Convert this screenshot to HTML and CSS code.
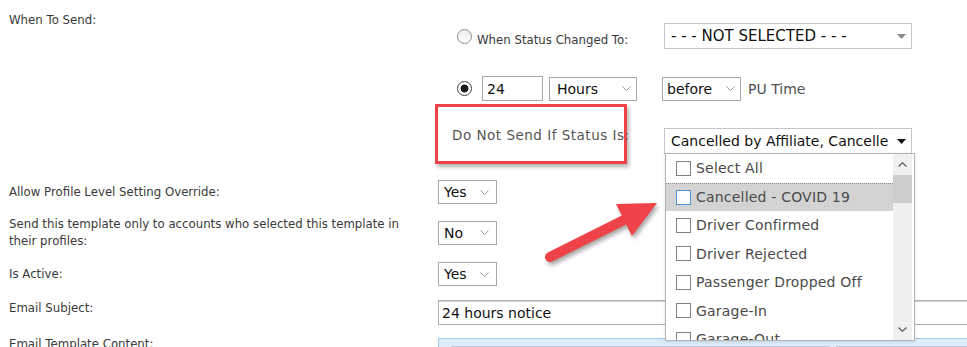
FILE: index.html
```html
<!DOCTYPE html>
<html lang="en">
<head>
  <meta charset="UTF-8">
  <meta name="viewport" content="width=device-width, initial-scale=1.0">
  <title>Email Template Settings</title>
  <link rel="stylesheet" href="styles.css">
</head>
<body>
  <div class="form">
    <div class="row row-when">
      <div class="label">When To Send:</div>
      <div class="field">
        <div class="sub-row">
          <div class="sub-label">
            <span class="radio"></span>
            <span class="radio-text">When Status Changed To:</span>
          </div>
          <div class="select select-status light big">
            <span>- - - NOT SELECTED - - -</span>
            <svg width="9" height="5" viewBox="0 0 9 5"><path d="M0 0H9L4.5 5Z" fill="#8a8a8a"/></svg>
          </div>
        </div>
        <div class="sub-row">
          <div class="sub-label">
            <span class="radio checked"></span>
            <span class="input input-num">24</span>
            <span class="select select-unit">
              <span>Hours</span>
              <svg width="9" height="5" viewBox="0 0 9 5"><path d="M0.5 0.5L4.5 4.5L8.5 0.5" fill="none" stroke="#9a9a9a"/></svg>
            </span>
          </div>
          <div class="sub-value">
            <span class="select select-before">
              <span>before</span>
              <svg width="9" height="5" viewBox="0 0 9 5"><path d="M0.5 0.5L4.5 4.5L8.5 0.5" fill="none" stroke="#9a9a9a"/></svg>
            </span>
            <span class="pu">PU Time</span>
          </div>
        </div>
        <div class="sub-row">
          <div class="sub-label dns">Do Not Send If Status Is:</div>
          <div class="select select-status light">
            <span>Cancelled by Affiliate, Cancelle</span>
            <svg width="9" height="5" viewBox="0 0 9 5"><path d="M0 0H9L4.5 5Z" fill="#111"/></svg>
          </div>
        </div>
      </div>
    </div>

    <div class="row row-allow">
      <div class="label">Allow Profile Level Setting Override:</div>
      <div class="field">
        <div class="select select-small">
          <span>Yes</span>
          <svg width="9" height="5" viewBox="0 0 9 5"><path d="M0.5 0.5L4.5 4.5L8.5 0.5" fill="none" stroke="#9a9a9a"/></svg>
        </div>
      </div>
    </div>

    <div class="row row-only">
      <div class="label two-line">Send this template only to accounts who selected this template in their profiles:</div>
      <div class="field">
        <div class="select select-small">
          <span>No</span>
          <svg width="9" height="5" viewBox="0 0 9 5"><path d="M0.5 0.5L4.5 4.5L8.5 0.5" fill="none" stroke="#9a9a9a"/></svg>
        </div>
      </div>
    </div>

    <div class="row row-active">
      <div class="label">Is Active:</div>
      <div class="field">
        <div class="select select-small">
          <span>Yes</span>
          <svg width="9" height="5" viewBox="0 0 9 5"><path d="M0.5 0.5L4.5 4.5L8.5 0.5" fill="none" stroke="#9a9a9a"/></svg>
        </div>
      </div>
    </div>

    <div class="row row-subject">
      <div class="label">Email Subject:</div>
      <div class="field">
        <div class="input input-subject">24 hours notice</div>
      </div>
    </div>

    <div class="row row-content">
      <div class="label">Email Template Content:</div>
      <div class="field">
        <div class="editor">
          <div class="toolbar">
            <span class="tool-group w1"></span>
            <span class="tool-group w1"></span>
            <span class="tool-group w2"></span>
            <span class="tool-group w3"></span>
            <span class="tool-group w4"></span>
          </div>
        </div>
      </div>
    </div>

    <!-- annotations -->
    <div class="callout"></div>
    <svg class="pointer" width="140" height="80" viewBox="0 0 140 80">
      <line x1="20" y1="67" x2="96" y2="29" stroke="#ef4349" stroke-width="10" stroke-linecap="round"/>
      <polygon points="127,13 86,14 102,46" fill="#ef4349"/>
    </svg>

    <!-- open status list -->
    <div class="dropdown">
      <div class="options">
        <div class="option"><span class="check"></span>Select All</div>
        <div class="option active"><span class="check focus"></span>Cancelled - COVID 19</div>
        <div class="option"><span class="check"></span>Driver Confirmed</div>
        <div class="option"><span class="check"></span>Driver Rejected</div>
        <div class="option"><span class="check"></span>Passenger Dropped Off</div>
        <div class="option"><span class="check"></span>Garage-In</div>
        <div class="option"><span class="check"></span>Garage-Out</div>
      </div>
      <div class="scrollbar">
        <div class="sb-btn">
          <svg width="9" height="5" viewBox="0 0 9 5"><path d="M0.5 4.5L4.5 0.8L8.5 4.5" fill="none" stroke="#606060" stroke-width="1.3"/></svg>
        </div>
        <div class="sb-thumb"></div>
        <div class="sb-track"></div>
        <div class="sb-btn">
          <svg width="9" height="5" viewBox="0 0 9 5"><path d="M0.5 0.5L4.5 4.2L8.5 0.5" fill="none" stroke="#606060" stroke-width="1.3"/></svg>
        </div>
      </div>
    </div>
  </div>
</body>
</html>
```

FILE: styles.css
```css
html, body {
  overflow: hidden;
}
body {
  margin: 0;
  font-family: "DejaVu Sans", Verdana, sans-serif;
  font-size: 11.75px;
  color: #3a3a3a;
  background: #fff;
}
.form {
  position: relative;
  padding: 12px 0 0 9px;
}
.row {
  display: flex;
  align-items: center;
}
.label {
  width: 404px;
  padding-right: 25px;
  line-height: 16px;
  flex-shrink: 0;
}
.label.two-line {
  line-height: 16.5px;
}
.field {
  flex: 1;
}

/* When To Send block */
.row-when {
  align-items: flex-start;
}
.row-when .field {
  margin-top: 11px;
  display: flex;
  flex-direction: column;
  gap: 27px;
}
.sub-row {
  display: flex;
  align-items: center;
}
.sub-label {
  width: 226px;
  padding-left: 19px;
  box-sizing: border-box;
  display: flex;
  align-items: center;
  flex-shrink: 0;
}
.sub-value {
  display: flex;
  align-items: center;
}
.radio {
  width: 15px;
  height: 15px;
  box-sizing: border-box;
  border: 1px solid #8c8c8c;
  border-radius: 50%;
  background: linear-gradient(#ececec, #fff);
  flex-shrink: 0;
}
.radio.checked {
  border-color: #3c3c3c;
  background: radial-gradient(circle, #1c1c1c 0 3.6px, #fff 4.3px);
}
.radio-text {
  margin: 7px 0 0 5px;
  line-height: 16px;
}
.dns {
  position: relative;
  z-index: 2;
  align-self: flex-start;
  margin-top: -1px;
  padding-left: 14px;
  font-size: 13.5px;
  letter-spacing: 0.5px;
  line-height: 16px;
  color: #555;
}

/* controls */
.select, .input {
  box-sizing: border-box;
  display: flex;
  align-items: center;
  border: 1px solid #a8a8a8;
  background: #fff;
  font-size: 14px;
  color: #111;
  white-space: nowrap;
  overflow: hidden;
}
.select {
  justify-content: space-between;
}
.select svg {
  flex-shrink: 0;
}
.select.light {
  border-color: #c6c6c6;
}
.select.big {
  font-size: 15px;
}
.select-status {
  width: 248px;
  height: 26px;
  padding: 0 5px 0 6px;
}
.select-small {
  width: 59px;
  height: 24px;
  padding: 0 7px 0 5px;
}
.input-num {
  width: 61px;
  height: 25px;
  margin-left: 10px;
  padding-left: 4px;
}
.select-unit {
  width: 88px;
  height: 24px;
  margin-left: 6px;
  padding: 0 5px 0 7px;
}
.select-before {
  width: 79px;
  height: 24px;
  margin-left: -2px;
  padding: 0 5px 0 4px;
}
.pu {
  margin-left: 7px;
  font-size: 14px;
  color: #505050;
}

/* lower rows */
.row-allow {
  margin-top: 26px;
}
.row-only {
  margin-top: 12px;
}
.row-active {
  margin-top: 13px;
}
.row-subject {
  margin-top: 14px;
  align-items: flex-start;
}
.input-subject {
  width: 620px;
  height: 25px;
  padding-left: 3px;
  border-color: #b0b0b0;
  box-shadow: inset 0 1px 0 #d2d2d2;
}
.row-content {
  margin-top: 13px;
  align-items: flex-start;
}
.row-content .label {
  margin-top: -2px;
}
.editor {
  width: 620px;
  height: 40px;
  box-sizing: border-box;
  background: #dcecf9;
  border: 1px solid #a4c7e6;
}
.toolbar {
  display: flex;
  margin: 7px 0 0 12px;
}
.tool-group {
  height: 22px;
  box-sizing: border-box;
  border: 1px solid #b9c8d6;
  background: #f3f7fb;
}
.tool-group.w1 { width: 92px; }
.tool-group.w2 { width: 142px; }
.tool-group.w3 { width: 53px; }
.tool-group.w4 { width: 140px; margin-left: 6px; }

/* annotations */
.callout {
  position: absolute;
  z-index: 1;
  left: 435px;
  top: 104px;
  width: 192px;
  height: 60px;
  box-sizing: border-box;
  border: 3px solid #ee4249;
  box-shadow: 2px 3px 4px rgba(0, 0, 0, 0.3);
}
.pointer {
  position: absolute;
  left: 530px;
  top: 190px;
  filter: drop-shadow(2px 3px 2px rgba(0, 0, 0, 0.35));
}

/* open multi-select list */
.dropdown {
  position: absolute;
  left: 665px;
  top: 153px;
  width: 250px;
  height: 188px;
  box-sizing: border-box;
  border: 1px solid #b4b4b4;
  padding-right: 2px;
  background: #fff;
  display: flex;
  overflow: hidden;
  box-shadow: 0 1px 3px rgba(0, 0, 0, 0.12);
}
.options {
  flex: 1;
  overflow: hidden;
}
.option {
  height: 28.5px;
  box-sizing: border-box;
  display: flex;
  align-items: center;
  padding-left: 10px;
  font-size: 14px;
  letter-spacing: 0.2px;
  color: #4a4a4a;
  white-space: nowrap;
}
.option.active {
  background: #d3d3d3;
  border-top: 1px dotted #8e8e8e;
}
.check {
  width: 15px;
  height: 15px;
  box-sizing: border-box;
  border: 1px solid #808080;
  background: #fff;
  margin-right: 5px;
  flex-shrink: 0;
}
.check.focus {
  border-color: #4f94d6;
}
.scrollbar {
  width: 19px;
  background: #f0f0f0;
  display: flex;
  flex-direction: column;
}
.sb-btn {
  height: 21px;
  display: flex;
  align-items: center;
  justify-content: center;
}
.sb-thumb {
  height: 28px;
  background: #cdcdcd;
}
.sb-track {
  flex: 1;
}
```
